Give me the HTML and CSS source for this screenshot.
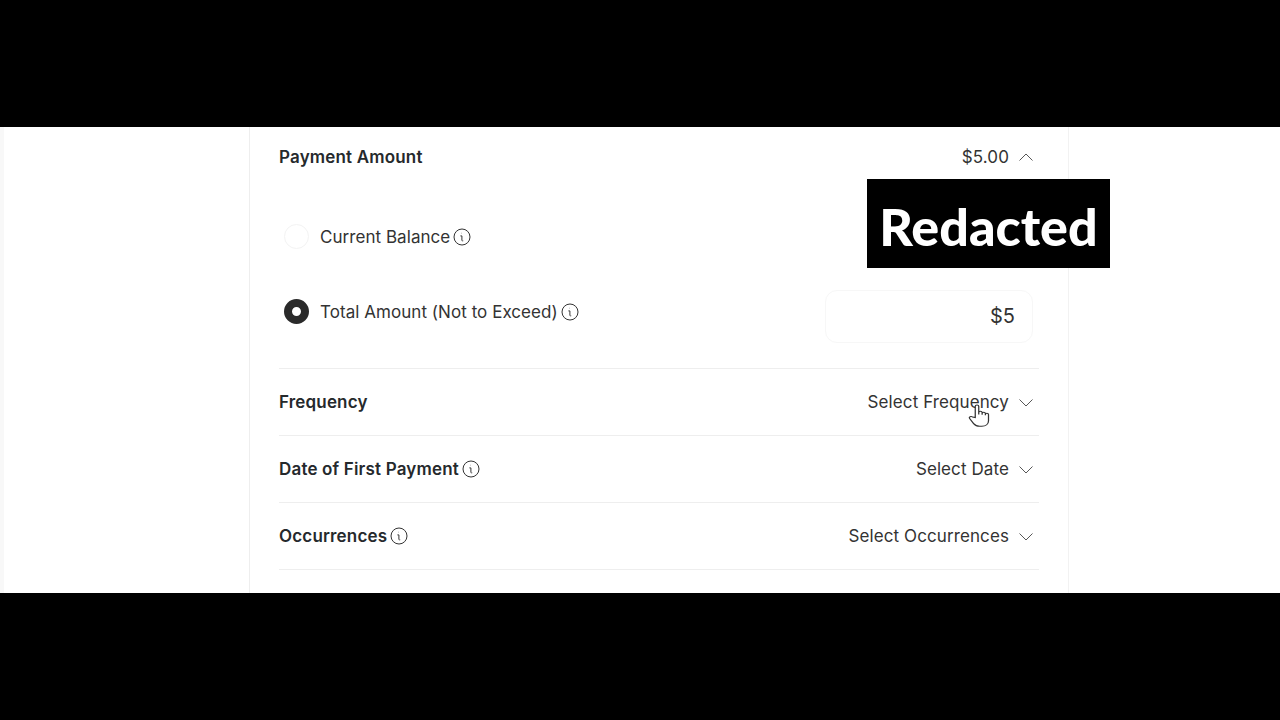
FILE: index.html
```html
<!DOCTYPE html>
<html lang="en">
<head>
    <meta charset="UTF-8">
    <meta name="viewport" content="width=device-width, initial-scale=1.0">
    <title>Payment</title>
    <link rel="stylesheet" href="styles.css">
</head>
<body>
    <div class="frame">
        <div class="panel">
            <div class="amount-head">
                <h3 class="label">Payment Amount</h3>
                <div class="value">
                    <span>$5.00</span>
                    <svg class="chevron" viewBox="0 0 16 10"><path d="M1.500 8.500 8 2l6.500 6.500"/></svg>
                </div>
            </div>
            <div class="options">
                <div class="option">
                    <span class="radio"></span>
                    <span class="option-text">Current Balance</span>
                    <svg class="info" viewBox="0 0 18 18"><circle cx="9" cy="9" r="8"/><path d="M8.300 5.200h.3M7.400 7.900h1.500v4.200c0 .7.500 1 1.300.7"/></svg>
                </div>
                <div class="option">
                    <span class="radio checked"></span>
                    <span class="option-text">Total Amount (Not to Exceed)</span>
                    <svg class="info" viewBox="0 0 18 18"><circle cx="9" cy="9" r="8"/><path d="M8.300 5.200h.3M7.400 7.900h1.500v4.200c0 .7.500 1 1.300.7"/></svg>
                    <div class="amount-input">$5</div>
                </div>
            </div>
            <div class="row">
                <div class="label">Frequency</div>
                <div class="value">
                    <span>Select Frequency</span>
                    <svg class="chevron" viewBox="0 0 16 10"><path d="M1.500 1.500 8 8l6.500-6.500"/></svg>
                </div>
            </div>
            <div class="row">
                <div class="label">Date of First Payment
                    <svg class="info" viewBox="0 0 18 18"><circle cx="9" cy="9" r="8"/><path d="M8.300 5.200h.3M7.400 7.900h1.500v4.200c0 .7.500 1 1.300.7"/></svg>
                </div>
                <div class="value">
                    <span>Select Date</span>
                    <svg class="chevron" viewBox="0 0 16 10"><path d="M1.500 1.500 8 8l6.500-6.500"/></svg>
                </div>
            </div>
            <div class="row">
                <div class="label">Occurrences
                    <svg class="info" viewBox="0 0 18 18"><circle cx="9" cy="9" r="8"/><path d="M8.300 5.200h.3M7.400 7.900h1.500v4.200c0 .7.500 1 1.300.7"/></svg>
                </div>
                <div class="value">
                    <span>Select Occurrences</span>
                    <svg class="chevron" viewBox="0 0 16 10"><path d="M1.500 1.500 8 8l6.500-6.500"/></svg>
                </div>
            </div>
        </div>
        <div class="redacted">Redacted</div>
        <svg class="cursor" viewBox="0 0 24 26" preserveAspectRatio="none"><path d="M8.200 14.500V3.300c0-1.700 2.800-1.700 2.800 0v8.200-2c0-1.600 2.700-1.600 2.700 0v2.300-1.400c0-1.600 2.600-1.600 2.600 0v1.800-.8c0-1.500 2.500-1.500 2.500 0v6.300c0 3.300-2.100 5.600-5.400 5.600h-1.600c-2.400 0-3.700-.9-4.900-2.700l-3.200-5c-1-1.600 1.100-2.900 2.300-1.600z"/></svg>
    </div>
</body>
</html>
```

FILE: styles.css
```css
* {
    margin: 0;
    padding: 0;
    box-sizing: border-box;
}
body {
    background-color: #000;
    font-family: 'Inter', 'Liberation Sans', sans-serif;
    color: #333;
    height: 720px;
    overflow: hidden;
    padding-top: 127px;
}
.frame {
    position: relative;
    height: 466px;
    background-color: #fff;
    border-left: 4px solid #f8f8f8;
    overflow: hidden;
}
.panel {
    width: 820px;
    height: 100%;
    margin-left: 245px;
    padding: 0 29px;
    border-left: 1px solid #eee;
    border-right: 1px solid #f2f2f2;
}
.amount-head {
    display: flex;
    justify-content: space-between;
    align-items: center;
    height: 59px;
    padding-right: 5px;
}
.label {
    display: flex;
    align-items: center;
    gap: 3px;
    font-size: 17px;
    font-weight: 600;
    letter-spacing: .17px;
    color: #25292c;
}
.value {
    display: flex;
    align-items: center;
    gap: 9px;
    font-size: 17px;
    letter-spacing: .1px;
}
.chevron {
    width: 16px;
    height: 10px;
    margin-top: 1px;
    fill: none;
    stroke: #444;
    stroke-width: .9;
}
.info {
    width: 18px;
    height: 18px;
    fill: none;
    stroke: #333;
    stroke-width: 1;
}
.options {
    height: 183px;
    padding-top: 13px;
    padding-left: 5px;
    padding-right: 6px;
    border-bottom: 1px solid #eee;
}
.option {
    display: flex;
    align-items: center;
    height: 75px;
    font-size: 17px;
    letter-spacing: .05px;
}
.option-text {
    margin-left: 11px;
    margin-right: 3px;
}
.radio {
    width: 25px;
    height: 25px;
    border-radius: 50%;
    border: 1px solid #f3f3f3;
    background-color: #fff;
}
.radio.checked {
    border: 8.500px solid #2a2a2a;
}
.amount-input {
    margin-left: auto;
    width: 208px;
    height: 53px;
    margin-top: 9px;
    padding-right: 17px;
    border: 1px solid #f7f7f7;
    border-radius: 12px;
    display: flex;
    align-items: center;
    justify-content: flex-end;
    font-size: 20px;
    letter-spacing: 0;
}
.row {
    display: flex;
    justify-content: space-between;
    align-items: center;
    height: 67px;
    padding-right: 5px;
    border-bottom: 1px solid #eee;
}
.redacted {
    position: absolute;
    left: 863px;
    top: 52px;
    width: 243px;
    height: 89px;
    padding-top: 4px;
    background-color: #000;
    color: #fff;
    font-family: 'Lato', sans-serif;
    font-weight: 900;
    font-size: 52px;
    display: flex;
    align-items: center;
    justify-content: center;
}
.cursor {
    position: absolute;
    left: 961px;
    top: 276px;
    width: 30px;
    height: 26px;
    fill: #fff;
    stroke: #333;
    stroke-width: 1;
}
```
